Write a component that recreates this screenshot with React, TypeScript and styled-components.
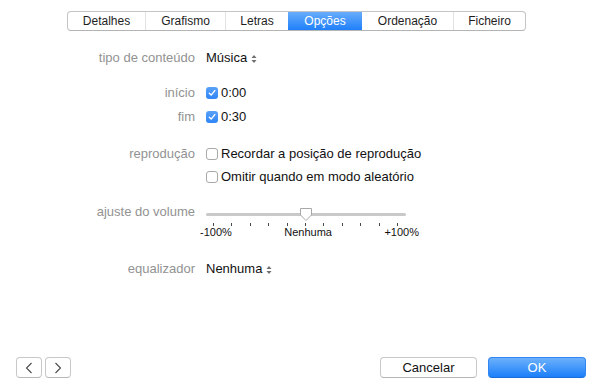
import React from "react";
import styled, { createGlobalStyle } from "styled-components";

const Global = createGlobalStyle`
  html, body { margin: 0; padding: 0; background: #fff; }
  body { font-family: "Liberation Sans", Arial, sans-serif; }
  #root { height: 392px; }
`;

const Page = styled.div`
  height: 392px;
  display: flex;
  flex-direction: column;
  box-sizing: border-box;
`;

const Header = styled.div`
  padding: 11px 0 0 67px;
  display: flex;
`;

const TabBar = styled.div`
  display: flex;
  height: 20px;
  box-sizing: border-box;
  border: 1px solid #c4c4c4;
  border-bottom-color: #b4b4b4;
  border-radius: 4px;
  overflow: hidden;
  background: #fff;
`;

const Tab = styled.div<{ $w: number; $active?: boolean; $first?: boolean }>`
  width: ${(p) => p.$w}px;
  display: flex;
  align-items: center;
  justify-content: center;
  font-size: 12px;
  color: ${(p) => (p.$active ? "#fff" : "#1e1e1e")};
  background: ${(p) => (p.$active ? "linear-gradient(#68adfb, #1f80fa)" : "transparent")};
  border-left: ${(p) => (p.$first || p.$active ? "none" : "1px solid #e2e2e2")};
  box-sizing: border-box;
`;

const Form = styled.div`
  display: grid;
  grid-template-columns: 195px 1fr;
  column-gap: 11px;
  align-items: center;
`;

const Label = styled.div<{ $top: number }>`
  grid-column: 1;
  align-self: start;
  margin-top: ${(p) => p.$top}px;
  text-align: right;
  font-size: 13px;
  color: #929292;
  line-height: 22px;
  height: 22px;
`;

const Value = styled.div<{ $top: number }>`
  grid-column: 2;
  margin-top: ${(p) => p.$top}px;
  display: flex;
  align-items: center;
  font-size: 13px;
  color: #111;
  line-height: 22px;
  height: 22px;
`;

const PopupArrows = styled.svg`
  margin-left: 4px;
  margin-top: 1px;
`;

const Check = styled.span<{ $on?: boolean }>`
  width: 12px;
  height: 12px;
  box-sizing: border-box;
  border-radius: 3px;
  margin-right: 3px;
  display: inline-flex;
  align-items: center;
  justify-content: center;
  background: ${(p) => (p.$on ? "linear-gradient(#59a1f9, #2f86f6)" : "#fff")};
  border: ${(p) => (p.$on ? "none" : "1px solid #a9a9a9")};
`;

const SliderBox = styled.div`
  grid-column: 2;
  align-self: start;
  margin-top: 16px;
  position: relative;
  width: 200px;
  height: 42px;
`;

const Track = styled.div`
  position: absolute;
  left: 0;
  right: 0;
  top: 9px;
  height: 3px;
  border-radius: 2px;
  background: #c9c9c9;
`;

const Thumb = styled.svg`
  position: absolute;
  left: 93px;
  top: 3px;
`;

const Ticks = styled.div`
  position: absolute;
  left: 7px;
  width: 185px;
  top: 19px;
  display: flex;
  justify-content: space-between;
`;

const Tick = styled.span`
  width: 1px;
  height: 3px;
  background: #4a4a4a;
`;

const TickLabels = styled.div`
  position: absolute;
  top: 21px;
  left: -6px;
  width: 219px;
  display: flex;
  justify-content: space-between;
  font-size: 11px;
  color: #111;
  line-height: 14px;
`;

const Footer = styled.div`
  margin-top: auto;
  padding: 0 17px 14px 16px;
  display: flex;
  align-items: center;
`;

const NavGroup = styled.div`
  display: flex;
  gap: 3px;
`;

const NavButton = styled.div`
  width: 26px;
  height: 21px;
  box-sizing: border-box;
  border: 1px solid #c8c8c8;
  border-bottom-color: #b8b8b8;
  border-radius: 4px;
  background: #fff;
  display: flex;
  align-items: center;
  justify-content: center;
`;

const Spacer = styled.div`
  flex: 1;
`;

const Button = styled.div<{ $primary?: boolean }>`
  width: ${(p) => (p.$primary ? 98 : 97)}px;
  height: 21px;
  margin-left: ${(p) => (p.$primary ? 11 : 0)}px;
  box-sizing: border-box;
  border-radius: 4px;
  display: flex;
  align-items: center;
  justify-content: center;
  font-size: 13px;
  color: ${(p) => (p.$primary ? "#fff" : "#111")};
  background: ${(p) => (p.$primary ? "linear-gradient(#6cb1fb, #1c7ffa)" : "#fff")};
  border: 1px solid ${(p) => (p.$primary ? "#2f86f4" : "#c8c8c8")};
  border-bottom-color: ${(p) => (p.$primary ? "#1b6ed8" : "#b5b5b5")};
`;

const Arrows = () => (
  <PopupArrows width="6" height="10" viewBox="0 0 6 10">
    <path d="M0.5 4 L3 1 L5.5 4 Z" fill="#6e6e6e" />
    <path d="M0.5 6 L3 9 L5.5 6 Z" fill="#6e6e6e" />
  </PopupArrows>
);

const CheckBox = ({ on }: { on?: boolean }) => (
  <Check $on={on}>
    {on && (
      <svg width="8" height="8" viewBox="0 0 8 8">
        <path d="M1.3 4.2 L3.2 6.1 L6.8 1.6" stroke="#fff" strokeWidth="1.4" fill="none" strokeLinecap="round" strokeLinejoin="round" />
      </svg>
    )}
  </Check>
);

const tabs: [string, number][] = [
  ["Detalhes", 77],
  ["Grafismo", 80],
  ["Letras", 63],
  ["Opções", 74],
  ["Ordenação", 91],
  ["Ficheiro", 72],
];

export default function App() {
  return (
    <Page>
      <Global />
      <Header>
        <TabBar>
          {tabs.map(([t, w], i) => (
            <Tab key={t} $w={w} $first={i === 0 || i === 4} $active={t === "Opções"}>
              {t}
            </Tab>
          ))}
        </TabBar>
      </Header>
      <Form>
        <Label $top={16}>tipo de conteúdo</Label>
        <Value $top={16}>
          Música
          <Arrows />
        </Value>

        <Label $top={13}>início</Label>
        <Value $top={13}>
          <CheckBox on />
          0:00
        </Value>

        <Label $top={2}>fim</Label>
        <Value $top={2}>
          <CheckBox on />
          0:30
        </Value>

        <Label $top={15}>reprodução</Label>
        <Value $top={15}>
          <CheckBox />
          Recordar a posição de reprodução
        </Value>

        <Label $top={1}>&nbsp;</Label>
        <Value $top={1}>
          <CheckBox />
          Omitir quando em modo aleatório
        </Value>

        <Label $top={13}>ajuste do volume</Label>
        <SliderBox>
          <Track />
          <Thumb width="14" height="15" viewBox="0 0 14 15">
            <path d="M1.5 1.5 H12.5 V8 L7 13.5 L1.5 8 Z" fill="#fff" stroke="#a8a8a8" strokeWidth="1" strokeLinejoin="round" />
          </Thumb>
          <Ticks>
            {Array.from({ length: 11 }).map((_, i) => (
              <Tick key={i} />
            ))}
          </Ticks>
          <TickLabels>
            <span>-100%</span>
            <span>Nenhuma</span>
            <span>+100%</span>
          </TickLabels>
        </SliderBox>

        <Label $top={12}>equalizador</Label>
        <Value $top={12}>
          Nenhuma
          <Arrows />
        </Value>
      </Form>
      <Footer>
        <NavGroup>
          <NavButton>
            <svg width="8" height="12" viewBox="0 0 8 12">
              <path d="M6.5 1 L1.5 6 L6.5 11" stroke="#4a4a4a" strokeWidth="1.1" fill="none" />
            </svg>
          </NavButton>
          <NavButton>
            <svg width="8" height="12" viewBox="0 0 8 12">
              <path d="M1.5 1 L6.5 6 L1.5 11" stroke="#4a4a4a" strokeWidth="1.1" fill="none" />
            </svg>
          </NavButton>
        </NavGroup>
        <Spacer />
        <Button>Cancelar</Button>
        <Button $primary>OK</Button>
      </Footer>
    </Page>
  );
}
